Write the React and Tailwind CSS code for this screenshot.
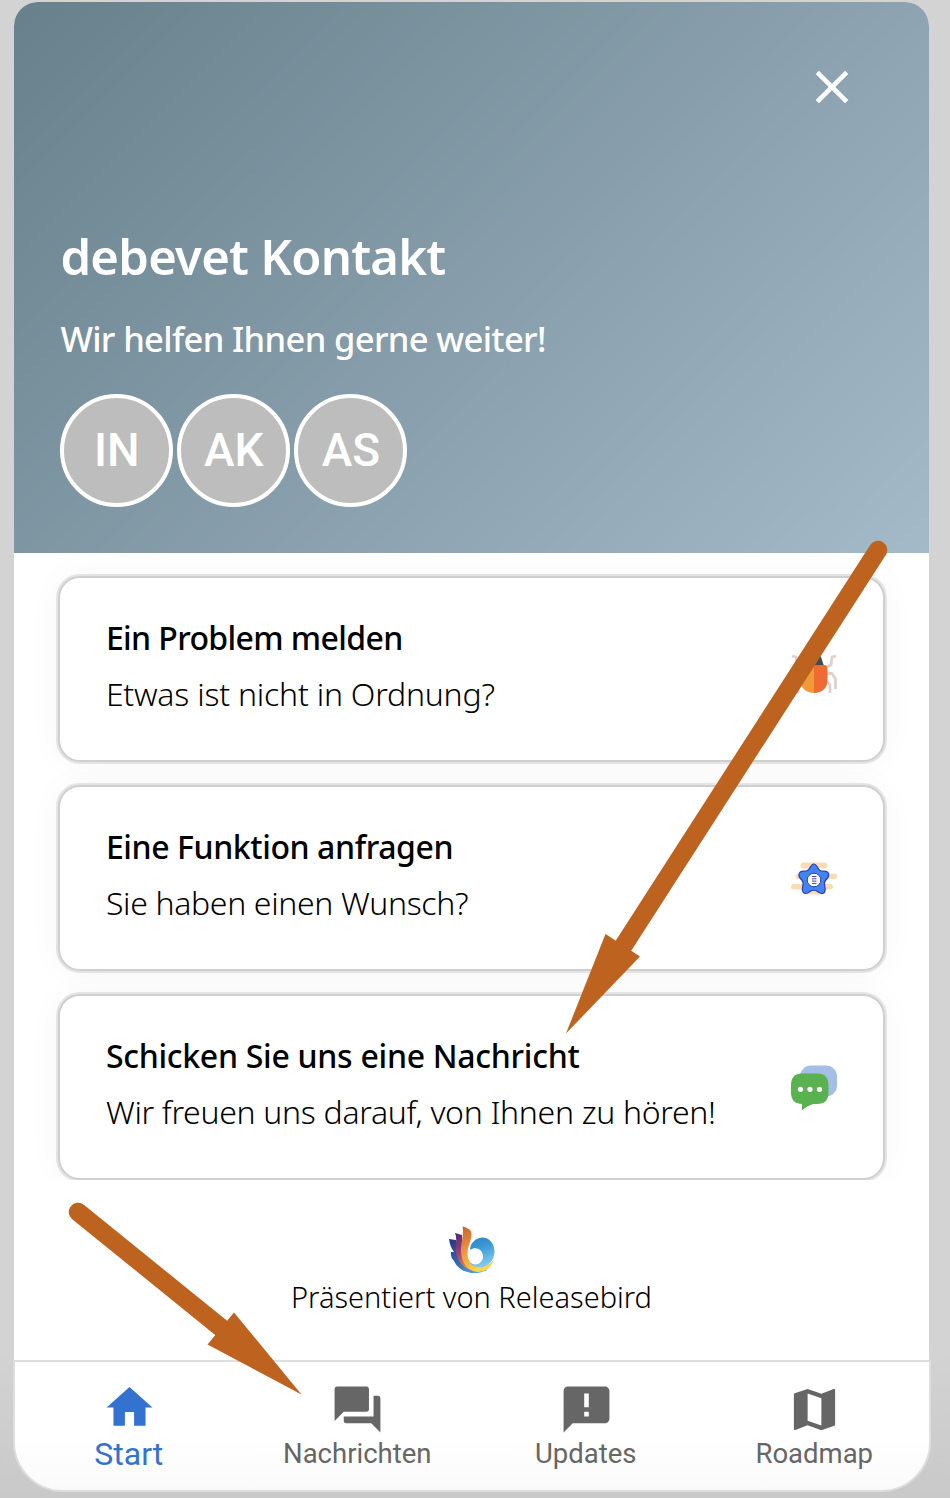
import { MdClose, MdHome, MdForum, MdAnnouncement, MdMap } from "react-icons/md";

function BugIcon() {
  return (
    <svg width="46" height="46" viewBox="0 -6 46 46" fill="none">
      <g stroke="#e0d0cc" strokeWidth="2.800" strokeLinejoin="round">
        <path d="M1 3 L5 4 L6 12 L11 14" />
        <path d="M45 3 L41 4 L40 12 L35 14" />
        <path d="M10 20.500 H5 L1.500 26 V36" />
        <path d="M36 20.500 H41 L44.500 26 V36" />
        <path d="M10 28 L7 32 V40" />
        <path d="M36 28 L39 32 V40" />
      </g>
      <path d="M13 13 L16 4 Q17 1.500 23 1.500 Q29 1.500 30 4 L33 13 Z" fill="#414b52" />
      <path d="M23 12 H13 Q9.500 12 9.500 16 V27 C9.500 35 15 40 23 40 Z" fill="#f09a38" />
      <path d="M23 12 H33 Q36.500 12 36.500 16 V27 C36.500 35 31 40 23 40 Z" fill="#ee6c33" />
    </svg>
  );
}

function StarIcon() {
  return (
    <svg width="46" height="46" viewBox="0 0 46 46" fill="none">
      <g fill="#fbdcb2">
        <rect x="9.500" y="6.500" width="27" height="6" rx="3" />
        <rect x="4.500" y="17.500" width="41.500" height="5.500" rx="2.750" />
        <rect x="0" y="28" width="42" height="5.500" rx="2.750" />
        <rect x="12" y="34" width="23" height="4.500" rx="2.250" />
      </g>
      <path
        d="M19 11.500 Q22.800 4.500 26.600 11.500 Q28.500 15.500 32 15.200 Q37.200 14.800 37.700 18.500 Q38 21 34.800 24 Q32.800 26 33.800 30 Q35 35.800 32.200 37.200 Q30 38.300 26.500 35.500 Q22.800 33 19 35.500 Q15.500 38.300 13.300 37.200 Q10.500 35.800 11.800 30 Q12.800 26 10.800 24 Q7.600 21 8 18.500 Q8.500 14.800 13.500 15.200 Q17 15.500 19 11.500 Z"
        fill="#4285f2"
        stroke="#2b3fae"
        strokeWidth="1.200"
      />
      <circle cx="23" cy="24" r="6.800" fill="#fff" stroke="#2b3fae" strokeWidth="1" />
      <path d="M21 20.500 H25.500 M21 22.800 H25.500 M21 25.100 H25.500 M21 27.400 H25.500" stroke="#4149a5" strokeWidth="1" />
    </svg>
  );
}

function ChatIcon() {
  return (
    <svg width="46" height="46" viewBox="0 0 46 46">
      <rect x="9" y="0.500" width="37" height="31" rx="11" fill="#a4bee8" />
      <path d="M11 8.500 H26 Q37.500 8.500 37.500 20 V27.500 Q37.500 39 26 39 H22 Q16 41 11.500 45 Q10.800 45.200 11 44 V39 Q0 38.500 0 27.500 V20 Q0 8.500 11 8.500 Z" fill="#59b24f" />
      <g fill="#fff">
        <circle cx="9.500" cy="24.300" r="2.600" />
        <circle cx="19" cy="24.300" r="2.600" />
        <circle cx="28.500" cy="24.300" r="2.600" />
      </g>
    </svg>
  );
}

function BirdLogo() {
  return (
    <svg className="ml-px" width="48" height="48" viewBox="0 0 48 48">
      <defs>
        <linearGradient id="blue" x1="0" y1="0" x2="0.300" y2="1">
          <stop offset="0" stopColor="#2c7fc4" />
          <stop offset="0.450" stopColor="#3d9ad6" />
          <stop offset="1" stopColor="#7cc8ee" />
        </linearGradient>
        <linearGradient id="flame" x1="0" y1="0" x2="0.400" y2="1">
          <stop offset="0" stopColor="#c4602c" />
          <stop offset="0.500" stopColor="#ef9440" />
          <stop offset="1" stopColor="#f9d44c" />
        </linearGradient>
        <linearGradient id="violet" x1="0" y1="0" x2="0.600" y2="1">
          <stop offset="0" stopColor="#46257e" />
          <stop offset="0.500" stopColor="#a34869" />
          <stop offset="1" stopColor="#f2a74b" />
        </linearGradient>
        <linearGradient id="navy" x1="0" y1="0" x2="0.700" y2="1">
          <stop offset="0" stopColor="#263383" />
          <stop offset="0.600" stopColor="#326bb5" />
          <stop offset="1" stopColor="#4aa8e0" />
        </linearGradient>
      </defs>
      <path d="M1 13 L8 14 C10 26 16 40 32 44 L40 43.500 C29 50 12 48 6 35 Q2 31 3 26 L6 26 Q2 21 1 13 Z" fill="url(#navy)" />
      <path d="M7 7 L14 9 C14 22 16 38 34 44 C19 47 9 38 7.500 24 C8 17 9 12 7 7 Z" fill="url(#violet)" />
      <path d="M14.500 0.500 C20 2 23.500 4 23.500 8 C23.500 15 19.500 20 19.500 28 C19.500 35 24 40 31 40.500 C38 40.500 43 38 46 33 C43 44 33 48 25 45 C16 42 12.500 32 13 22 C13.500 14 16 9 14.500 0.500 Z" fill="url(#flame)" />
      <path d="M22 24 C22 17 28 11.500 35 11.500 C42 12 46.500 18 46.500 26 C46 35 40 41 32 41 C27 41 23 39 21 36 C28 41.500 35.500 37 35 30 C34.500 23 27.500 20 22 24 Z" fill="url(#blue)" />
    </svg>
  );
}

const avatars = ["IN", "AK", "AS"];

const cards = [
  { title: "Ein Problem melden", text: "Etwas ist nicht in Ordnung?", Icon: BugIcon, tw: "tracking-[-0.620px]", sw: "tracking-[-0.220px]" },
  { title: "Eine Funktion anfragen", text: "Sie haben einen Wunsch?", Icon: StarIcon, tw: "tracking-[-0.410px]", sw: "tracking-[-0.340px]" },
  { title: "Schicken Sie uns eine Nachricht", text: "Wir freuen uns darauf, von Ihnen zu hören!", Icon: ChatIcon, tw: "tracking-[-0.280px]", sw: "tracking-[-0.310px]" },
];

const tabs = [
  { label: "Start", Icon: MdHome, active: true },
  { label: "Nachrichten", Icon: MdForum },
  { label: "Updates", Icon: MdAnnouncement },
  { label: "Roadmap", Icon: MdMap },
];

function Header() {
  return (
    <header className="flex h-[551px] flex-col rounded-t-[24px] bg-linear-[135deg,#687f8c,#a4bac8] pl-[46px] text-white">
      <div className="flex h-[220px] justify-end pt-[57px] pr-[69px]">
        <MdClose className="size-[56px]" />
      </div>
      <h1 className="-mt-px h-[70px] text-[49px] leading-[70px] font-semibold tracking-[-0.750px] whitespace-nowrap">debevet Kontakt</h1>
      <p className="mt-[23px] h-[50px] text-[34.500px] leading-[50px] font-medium tracking-[-0.650px] whitespace-nowrap">Wir helfen Ihnen gerne weiter!</p>
      <div className="mt-[30px] flex gap-[4px] font-['Roboto',sans-serif]">
        {avatars.map((a) => (
          <div key={a} className="flex size-[113px] items-center justify-center rounded-full border-[4.500px] border-white bg-[#bdbdbd] text-[46px] font-medium">
            {a}
          </div>
        ))}
      </div>
    </header>
  );
}

function Card({ title, text, Icon, tw, sw }) {
  return (
    <section className="flex h-[186px] shrink-0 items-center justify-between rounded-[22px] border-2 border-[#cfcfcf] bg-white pr-[46px] pl-[45.500px] shadow-[0_0_0_2px_#e4e4e4,0_0_34px_rgba(0,0,0,0.04)]">
      <div className="-mt-[7px] whitespace-nowrap text-black">
        <h2 className={"text-[32px] leading-[56px] font-medium " + tw}>{title}</h2>
        <p className={"text-[32px] leading-[56px] font-light " + sw}>{text}</p>
      </div>
      <div className="mt-[2px]">
        <Icon />
      </div>
    </section>
  );
}

function Arrows() {
  return (
    <svg className="pointer-events-none absolute inset-0" width="950" height="1498" viewBox="0 0 950 1498" fill="#bd631f" stroke="none">
      <path d="M878 550 L622 948" stroke="#bd631f" strokeWidth="18.500" strokeLinecap="round" />
      <path d="M605.500 934 L640 956.500 L566 1033.500 Z" />
      <path d="M78 1212 L225 1331" stroke="#bd631f" strokeWidth="18.500" strokeLinecap="round" />
      <path d="M234 1312.500 L207.500 1344.500 L301.500 1394.500 Z" />
    </svg>
  );
}

export default function App() {
  return (
    <div className="relative flex h-[1498px] w-[950px] flex-col overflow-hidden bg-linear-to-b from-[#d3d3d3] from-90% to-[#c9c9c9] pt-[2px] font-['Noto_Sans',sans-serif]">
      <main className="ml-[14.400px] flex h-[1358px] w-[914.200px] flex-col rounded-t-[24px] bg-white">
        <Header />
        <div className="flex h-[627px] flex-col gap-[23px] overflow-hidden pt-[23px] pr-[43.500px] pl-[44px]">
          {cards.map((c) => (
            <Card key={c.title} {...c} />
          ))}
        </div>
        <footer className="flex flex-col items-center pt-[46px]">
          <BirdLogo />
          <p className="text-[29px] leading-[45px] font-light whitespace-nowrap text-black">Präsentiert von Releasebird</p>
        </footer>
      </main>
      <nav className="ml-[12.500px] grid h-[132px] w-[918px] grid-cols-4 rounded-b-[50px] border-2 border-[#dedede] bg-linear-to-b from-white from-60% to-[#fafafa] font-['Roboto',sans-serif]">
        {tabs.map(({ label, Icon, active }) => (
          <div key={label} className={active ? "flex flex-col items-center pt-[18px] text-[#3472d0]" : "flex flex-col items-center pt-[20px] text-[#666]"}>
            <Icon className="ml-px size-[55px]" />
            <span className={active ? "text-[32px] leading-[38px]" : "text-[27.500px] leading-[34px]"}>{label}</span>
          </div>
        ))}
      </nav>
      <Arrows />
    </div>
  );
}
